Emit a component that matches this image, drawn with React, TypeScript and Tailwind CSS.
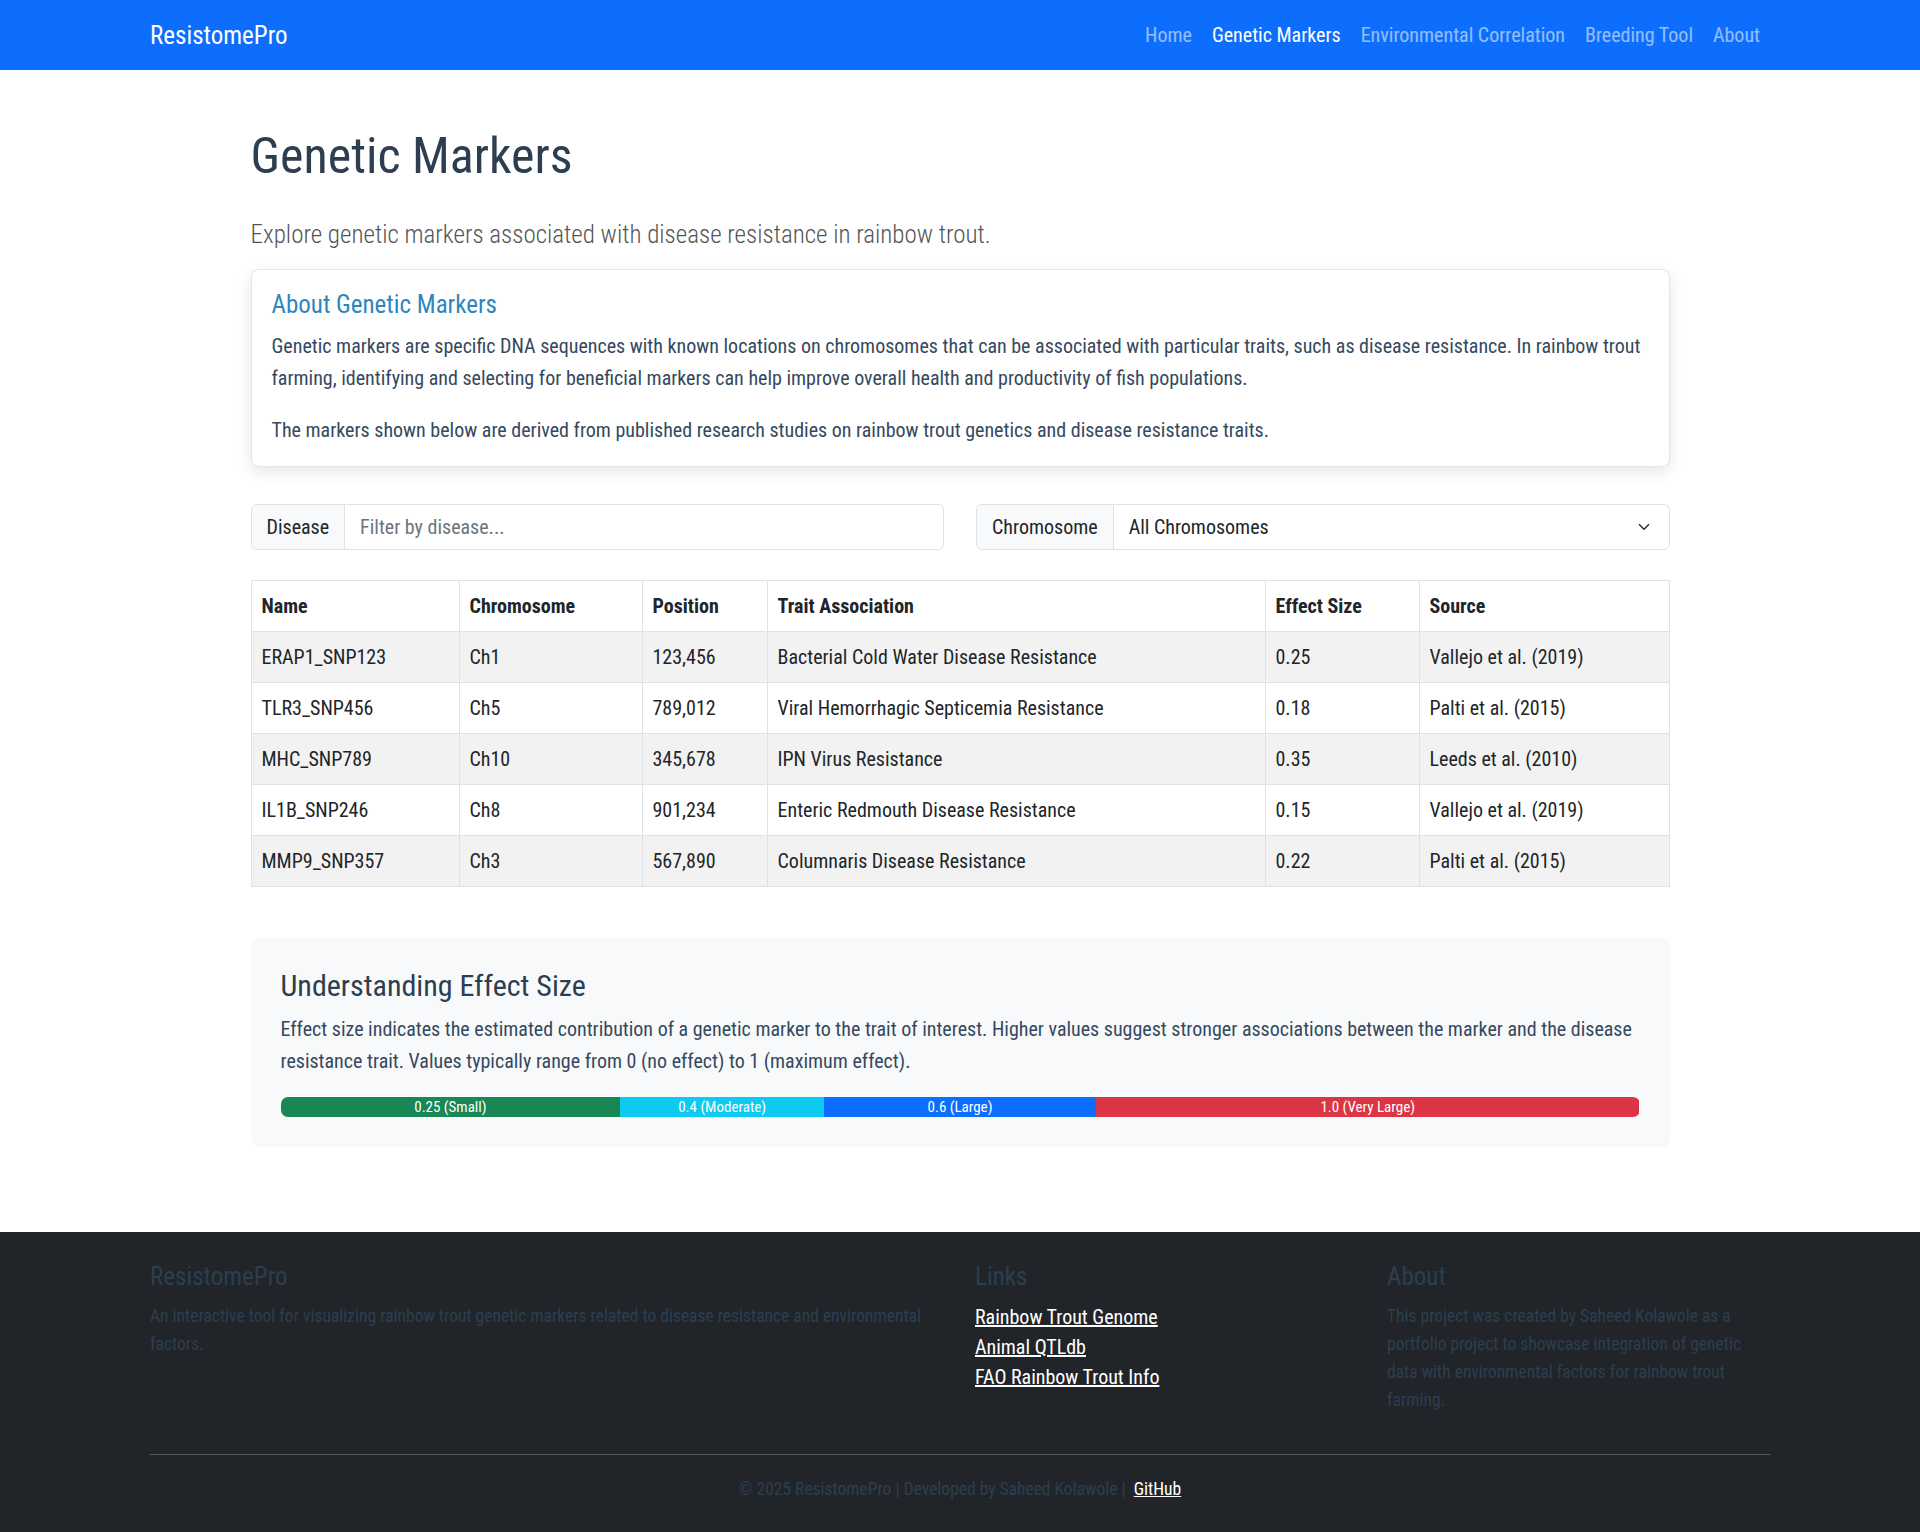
import { ChevronDown } from "lucide-react";

const markers = [
  { name: "ERAP1_SNP123", chr: "Ch1", pos: "123,456", trait: "Bacterial Cold Water Disease Resistance", effect: "0.25", source: "Vallejo et al. (2019)" },
  { name: "TLR3_SNP456", chr: "Ch5", pos: "789,012", trait: "Viral Hemorrhagic Septicemia Resistance", effect: "0.18", source: "Palti et al. (2015)" },
  { name: "MHC_SNP789", chr: "Ch10", pos: "345,678", trait: "IPN Virus Resistance", effect: "0.35", source: "Leeds et al. (2010)" },
  { name: "IL1B_SNP246", chr: "Ch8", pos: "901,234", trait: "Enteric Redmouth Disease Resistance", effect: "0.15", source: "Vallejo et al. (2019)" },
  { name: "MMP9_SNP357", chr: "Ch3", pos: "567,890", trait: "Columnaris Disease Resistance", effect: "0.22", source: "Palti et al. (2015)" },
];

const navLinks = ["Home", "Genetic Markers", "Environmental Correlation", "Breeding Tool", "About"];

export default function App() {
  return (
    <div className="min-h-screen bg-white font-['Roboto_Condensed','Roboto',sans-serif] text-[20px] leading-[30px] text-[#212529]">
      {/* Navbar */}
      <nav className="h-[70px] bg-[#0d6efd]">
        <div className="mx-auto flex h-full w-[1620px] items-center justify-between">
          <a href="#" className="text-[25px] leading-[37px] text-white">ResistomePro</a>
          <ul className="flex items-center">
            {navLinks.map((l) => (
              <li key={l}>
                <a
                  href="#"
                  className={
                    l === "Genetic Markers"
                      ? "px-[10px] text-[20px] text-white"
                      : "px-[10px] text-[20px] text-white/55"
                  }
                >
                  {l}
                </a>
              </li>
            ))}
          </ul>
        </div>
      </nav>

      <main className="mx-auto w-[1419px] pt-[56px] pb-[85px]">
        <h1 className="text-[50px] leading-[60px] font-normal text-[#2c3e50]">Genetic Markers</h1>
        <p className="mt-[30px] text-[25px] leading-[38px] font-light text-[#555]">
          Explore genetic markers associated with disease resistance in rainbow trout.
        </p>

        {/* About card */}
        <div className="mt-[15px] rounded-lg border border-black/10 bg-white p-5 shadow-[0_5px_15px_rgba(0,0,0,0.1)]">
          <h5 className="text-[25px] leading-[30px] text-[#2e86c1]">About Genetic Markers</h5>
          <p className="mt-[10px] text-[20px] leading-[32px] text-[#34495e]">
            Genetic markers are specific DNA sequences with known locations on chromosomes that can be associated with
            particular traits, such as disease resistance. In rainbow trout farming, identifying and selecting for
            beneficial markers can help improve overall health and productivity of fish populations.
          </p>
          <p className="mt-5 text-[20px] leading-[32px] text-[#34495e]">
            The markers shown below are derived from published research studies on rainbow trout genetics and disease
            resistance traits.
          </p>
        </div>

        {/* Filters */}
        <div className="mt-[37px] grid grid-cols-2 gap-8">
          <div className="flex h-[46px] rounded-md border border-[#dee2e6]">
            <span className="flex items-center rounded-l-md border-r border-[#dee2e6] bg-[#f8f9fa] px-[15px] text-[#212529]">
              Disease
            </span>
            <input
              placeholder="Filter by disease..."
              className="min-w-0 flex-1 rounded-r-md bg-white px-[15px] text-[20px] text-[#212529] outline-none placeholder:text-[#6c757d]"
            />
          </div>
          <div className="flex h-[46px] rounded-md border border-[#dee2e6]">
            <span className="flex items-center rounded-l-md border-r border-[#dee2e6] bg-[#f8f9fa] px-[15px] text-[#212529]">
              Chromosome
            </span>
            <div className="flex flex-1 items-center justify-between rounded-r-md bg-white pr-[16px] pl-[15px] text-[#212529]">
              <span>All Chromosomes</span>
              <ChevronDown size={18} strokeWidth={2.2} className="text-[#343a40]" />
            </div>
          </div>
        </div>

        {/* Table */}
        <table className="mt-[30px] w-full border-collapse border border-[#dee2e6]">
          <thead>
            <tr className="border-b border-[#dee2e6]">
              <th className="w-[208px] border-r border-[#dee2e6] p-[10px] text-left font-bold">Name</th>
              <th className="w-[183px] border-r border-[#dee2e6] p-[10px] text-left font-bold">Chromosome</th>
              <th className="w-[125px] border-r border-[#dee2e6] p-[10px] text-left font-bold">Position</th>
              <th className="w-[498px] border-r border-[#dee2e6] p-[10px] text-left font-bold">Trait Association</th>
              <th className="w-[154px] border-r border-[#dee2e6] p-[10px] text-left font-bold">Effect Size</th>
              <th className="p-[10px] text-left font-bold">Source</th>
            </tr>
          </thead>
          <tbody>
            {markers.map((m, i) => (
              <tr key={m.name} className={i % 2 === 0 ? "border-b border-[#dee2e6] bg-[#f2f2f2]" : "border-b border-[#dee2e6] bg-white"}>
                <td className="border-r border-[#dee2e6] p-[10px]">{m.name}</td>
                <td className="border-r border-[#dee2e6] p-[10px]">{m.chr}</td>
                <td className="border-r border-[#dee2e6] p-[10px]">{m.pos}</td>
                <td className="border-r border-[#dee2e6] p-[10px]">{m.trait}</td>
                <td className="border-r border-[#dee2e6] p-[10px]">{m.effect}</td>
                <td className="p-[10px]">{m.source}</td>
              </tr>
            ))}
          </tbody>
        </table>

        {/* Effect size */}
        <div className="mt-[51px] rounded-lg bg-[#f8f9fa] p-[30px]">
          <h4 className="text-[30px] leading-[36px] text-[#2c3e50]">Understanding Effect Size</h4>
          <p className="mt-[9px] text-[20px] leading-[32px] text-[#34495e]">
            Effect size indicates the estimated contribution of a genetic marker to the trait of interest. Higher values
            suggest stronger associations between the marker and the disease resistance trait. Values typically range
            from 0 (no effect) to 1 (maximum effect).
          </p>
          <div className="mt-5 flex h-[20px] overflow-hidden rounded-[7px] text-[15px] leading-[20px] text-white">
            <div className="w-[25%] bg-[#198754] text-center">0.25 (Small)</div>
            <div className="w-[15%] bg-[#0dcaf0] text-center">0.4 (Moderate)</div>
            <div className="w-[20%] bg-[#0d6efd] text-center">0.6 (Large)</div>
            <div className="w-[40%] bg-[#dc3545] text-center">1.0 (Very Large)</div>
          </div>
        </div>
      </main>

      {/* Footer */}
      <footer className="bg-[#212529] pt-[30px] pb-[30px]">
        <div className="mx-auto w-[1620px]">
          <div className="grid grid-cols-[825px_412px_1fr]">
            <div className="pr-[24px]">
              <h5 className="text-[25px] leading-[30px] text-[#2c3e50]">ResistomePro</h5>
              <p className="mt-[10px] text-[17.5px] leading-[28px] text-[#2c3e50]">
                An interactive tool for visualizing rainbow trout genetic markers related to disease resistance and
                environmental factors.
              </p>
            </div>
            <div className="pr-[24px]">
              <h5 className="text-[25px] leading-[30px] text-[#2c3e50]">Links</h5>
              <ul className="mt-[10px] flex flex-col text-[20px] leading-[30px]">
                <li><a href="#" className="text-white underline">Rainbow Trout Genome</a></li>
                <li><a href="#" className="text-white underline">Animal QTLdb</a></li>
                <li><a href="#" className="text-white underline">FAO Rainbow Trout Info</a></li>
              </ul>
            </div>
            <div>
              <h5 className="text-[25px] leading-[30px] text-[#2c3e50]">About</h5>
              <p className="mt-[10px] text-[17.5px] leading-[28px] text-[#2c3e50]">
                This project was created by Saheed Kolawole as a portfolio project to showcase integration of genetic data
                with environmental factors for rainbow trout farming.
              </p>
            </div>
          </div>
          <hr className="mt-[40px] border-t border-[#55595c]" />
          <p className="mt-5 text-center text-[17.5px] leading-[28px] text-[#2c3e50]">
            © 2025 ResistomePro | Developed by Saheed Kolawole |{" "}
            <a href="#" className="ml-[4px] text-white underline">GitHub</a>
          </p>
        </div>
      </footer>
    </div>
  );
}
